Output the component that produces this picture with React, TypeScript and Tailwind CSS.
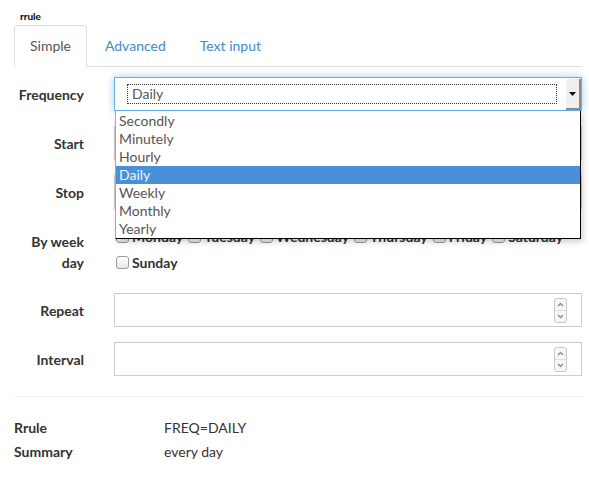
const options = ["Secondly", "Minutely", "Hourly", "Daily", "Weekly", "Monthly", "Yearly"];
const weekdays = ["Monday", "Tuesday", "Wednesday", "Thursday", "Friday", "Saturday"];

const Checkbox = ({ label }: { label: string }) => (
  <label className="flex items-center gap-[3px] mr-[5px]">
    <span className="w-[13px] h-[13px] rounded-[3px] border border-[#9a9a9a] bg-gradient-to-b from-white to-[#e9e9e9]" />
    <span className="font-bold">{label}</span>
  </label>
);

const Spinner = () => (
  <div className="absolute right-[14px] top-[4px] w-[13px] h-[25px] rounded-[3px] border border-[#c8c8c8] bg-[#f7f7f7] flex flex-col">
    <div className="flex-1 flex items-center justify-center border-b border-[#e0e0e0]">
      <svg width="7" height="5" viewBox="0 0 7 5">
        <path d="M1 4 L3.5 1.5 L6 4" fill="none" stroke="#8a8a8a" strokeWidth="1.3" />
      </svg>
    </div>
    <div className="flex-1 flex items-center justify-center">
      <svg width="7" height="5" viewBox="0 0 7 5">
        <path d="M1 1 L3.5 3.5 L6 1" fill="none" stroke="#8a8a8a" strokeWidth="1.3" />
      </svg>
    </div>
  </div>
);

const Row = ({ label, children, tall }: { label: React.ReactNode; children: React.ReactNode; tall?: boolean }) => (
  <div className={`flex gap-[30px] mb-[15px] ${tall ? "h-[54px]" : "h-[34px]"}`}>
    <div className="w-[70px] shrink-0 text-right font-bold pt-[7px] leading-[21px]">{label}</div>
    <div className="flex-1 relative">{children}</div>
  </div>
);

const NumberInput = () => (
  <div className="relative h-[34px] border border-[#ccc] bg-white">
    <Spinner />
  </div>
);

export default function App() {
  return (
    <div className="min-h-screen bg-white text-[#333] text-[14px] font-['Lato',sans-serif] pl-[14px] pr-[7px]">
      <div className="pt-[10px] h-[22px] mb-[3px] pl-[6px] text-[10px] leading-[12px] font-bold text-black">rrule</div>

      <nav className="flex border-b border-[#ddd] h-[42px]">
        <div className="px-[15px] py-[10px] leading-[20px] border border-[#ddd] border-b-white rounded-t-[4px] text-[#555] bg-white h-[42px]">
          Simple
        </div>
        <div className="ml-[2px] px-[15px] py-[10px] leading-[20px] text-[#428bca] border border-transparent">Advanced</div>
        <div className="ml-[2px] px-[15px] py-[10px] leading-[20px] text-[#428bca] border border-transparent">Text input</div>
      </nav>

      <div className="mt-[10px]">
        <Row label="Frequency">
          <div className="relative h-[34px] border border-[#66afe9] bg-white shadow-[0_0_8px_rgba(102,175,233,0.6)] z-20">
            <div className="absolute left-[12px] top-[6px] w-[430px] h-[20px] border border-dotted border-[#333] pl-[4px] leading-[18px] text-[#555]">
              Daily
            </div>
            <div className="absolute right-0 top-px bottom-0 w-[15px] bg-[#efefef] border-r-2 border-b-2 border-[#8c8c8c] flex items-center justify-center">
              <svg width="7" height="4" viewBox="0 0 7 4">
                <path d="M0 0 H7 L3.5 4 Z" fill="#111" />
              </svg>
            </div>
            <div className="absolute left-0 right-0 top-[33px] h-[128px] bg-white border-l border-l-[#a8a8a8] border-r border-r-black border-b border-b-black shadow-[2px_3px_6px_rgba(0,0,0,0.18)] pt-[1px]">
              {options.map((o) => (
                <div
                  key={o}
                  className={`h-[18px] leading-[18px] pl-[3px] ${o === "Daily" ? "bg-[#4a90d9] text-[#eef4fb]" : "text-[#5a5550]"}`}
                >
                  {o}
                </div>
              ))}
            </div>
          </div>
        </Row>
        <Row label="Start">
          <div className="h-[34px] border border-[#ccc]" />
        </Row>
        <Row label="Stop">
          <div className="h-[34px] border border-[#ccc]" />
        </Row>
        <Row label="By week day" tall>
          <div className="pl-[2px] -mt-[1px]">
            <div className="flex items-center h-[26px] whitespace-nowrap">
              {weekdays.map((d) => (
                <Checkbox key={d} label={d} />
              ))}
            </div>
            <div className="flex items-center h-[26px]">
              <Checkbox label="Sunday" />
            </div>
          </div>
        </Row>
        <Row label="Repeat">
          <NumberInput />
        </Row>
        <Row label="Interval">
          <NumberInput />
        </Row>
      </div>

      <div className="mt-[20px] mb-[19px] border-t border-[#eee]" />

      <div className="leading-[24px]">
        <div className="flex">
          <div className="w-[150px] font-bold">Rrule</div>
          <div>FREQ=DAILY</div>
        </div>
        <div className="flex">
          <div className="w-[150px] font-bold">Summary</div>
          <div>every day</div>
        </div>
      </div>
    </div>
  );
}
